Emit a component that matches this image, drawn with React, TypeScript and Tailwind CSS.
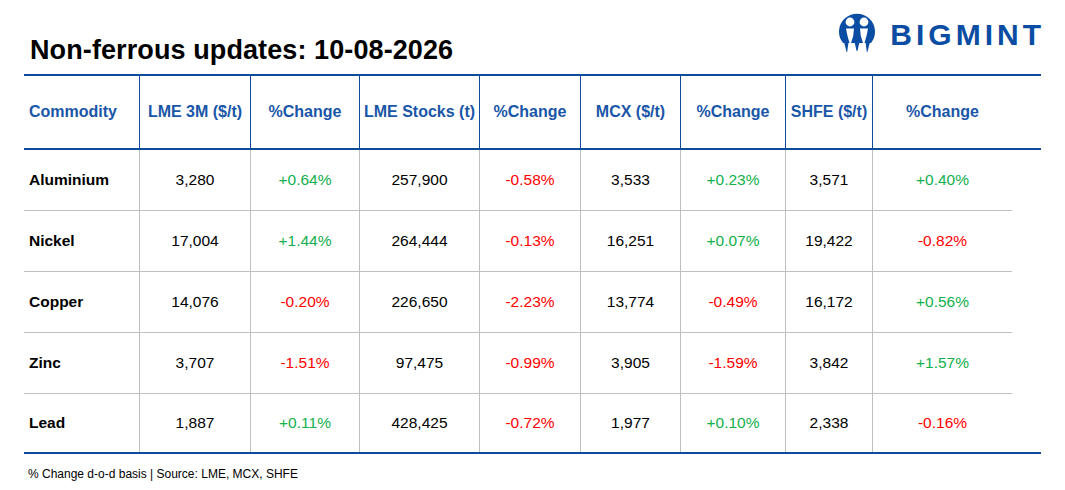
const cols = "grid grid-cols-[116px_111px_109px_120px_101px_100px_105px_87px_139px]";

const headers = [
  "Commodity",
  "LME 3M ($/t)",
  "%Change",
  "LME Stocks (t)",
  "%Change",
  "MCX ($/t)",
  "%Change",
  "SHFE ($/t)",
  "%Change",
];

const rows = [
  ["Aluminium", "3,280", "+0.64%", "257,900", "-0.58%", "3,533", "+0.23%", "3,571", "+0.40%"],
  ["Nickel", "17,004", "+1.44%", "264,444", "-0.13%", "16,251", "+0.07%", "19,422", "-0.82%"],
  ["Copper", "14,076", "-0.20%", "226,650", "-2.23%", "13,774", "-0.49%", "16,172", "+0.56%"],
  ["Zinc", "3,707", "-1.51%", "97,475", "-0.99%", "3,905", "-1.59%", "3,842", "+1.57%"],
  ["Lead", "1,887", "+0.11%", "428,425", "-0.72%", "1,977", "+0.10%", "2,338", "-0.16%"],
];

function BigmintMark() {
  return (
    <svg width="40" height="44" viewBox="0 0 40 44">
      {/* disc, open at the bottom */}
      <path d="M6 33 A18 18 0 1 1 34 33 Z" fill="#0a4da2" />
      {/* heads */}
      <circle cx="13" cy="12" r="4.4" fill="#fff" />
      <circle cx="27" cy="12" r="4.4" fill="#fff" />
      {/* bodies */}
      <path d="M9 18.5 L17 18.5 L16.2 26 L14 33 L12.5 33 L10.5 26 Z" fill="#fff" />
      <path d="M31 18.5 L23 18.5 L23.8 26 L26 33 L27.5 33 L29.5 26 Z" fill="#fff" />
      {/* legs */}
      <path d="M7 32 L11.5 32 L10.2 42 L9.6 42 Z" fill="#0a4da2" />
      <path d="M17.5 32 L22.5 32 L20.4 41 L19.6 41 Z" fill="#0a4da2" />
      <path d="M28.5 32 L33 32 L30.4 42 L29.8 42 Z" fill="#0a4da2" />
    </svg>
  );
}

export default function App() {
  return (
    <div className="w-[1065px] h-[490px] bg-white overflow-hidden font-['Liberation_Sans',Arial,sans-serif] text-black">
      {/* Title + logo */}
      <div className="flex justify-between items-start pl-[30px] pr-[20px]">
        <h1 className="mt-[37px] text-[27px] leading-[27px] font-bold tracking-[0.1px]">
          Non-ferrous updates: 10-08-2026
        </h1>
        <div className="mt-[10px] flex items-start gap-[13px]">
          <BigmintMark />
          <span className="mt-[10px] text-[30px] leading-[30px] font-bold tracking-[4px] text-[#0a4da2]">
            BIGMINT
          </span>
        </div>
      </div>

      {/* Table */}
      <div className="ml-[24px] mt-[10px] w-[1017px] border-y-2 border-[#0d4d9c]">
        <div className="h-[74px] border-b-2 border-[#0d4d9c]">
          <div className={`${cols} h-full`}>
            {headers.map((h, i) => (
              <div
                key={i}
                className={`flex items-center text-[16px] font-bold text-[#1a56a8] ${
                  i === 0 ? "pl-[5px]" : "justify-center"
                } ${i < 8 ? "border-r border-[#0d4d9c]" : ""}`}
              >
                {h}
              </div>
            ))}
          </div>
        </div>

        {rows.map((row, r) => (
          <div
            key={r}
            className={`${cols} w-[988px] ${
              r < rows.length - 1 ? "h-[61px] border-b border-[#bfbfbf]" : "h-[58px]"
            }`}
          >
            {row.map((cell, i) => {
              const isChange = i === 2 || i === 4 || i === 6 || i === 8;
              const color = isChange
                ? cell.startsWith("+")
                  ? "text-[#12b04c]"
                  : "text-[#ff0000]"
                : "text-black";
              return (
                <div
                  key={i}
                  className={`flex items-center text-[15.5px] ${
                    i === 0 ? "pl-[5px] font-bold" : "justify-center"
                  } ${color} ${i < 8 ? "border-r border-[#bfbfbf]" : ""}`}
                >
                  {cell}
                </div>
              );
            })}
          </div>
        ))}
      </div>

      <p className="mt-[12px] pl-[28px] text-[12px] leading-[16px]">
        % Change d-o-d basis | Source: LME, MCX, SHFE
      </p>
    </div>
  );
}
